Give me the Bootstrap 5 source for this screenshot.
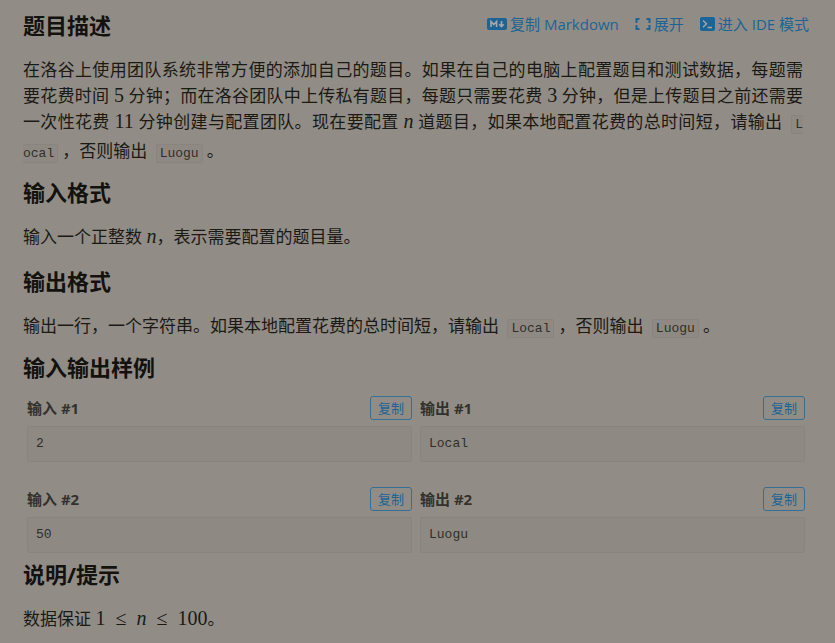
<!DOCTYPE html>
<html lang="zh-CN">
<head>
<meta charset="utf-8">
<meta name="viewport" content="width=device-width, initial-scale=1">
<title>题目描述</title>
<link href="https://cdn.jsdelivr.net/npm/bootstrap@5.3.0/dist/css/bootstrap.min.css" rel="stylesheet">
<style>
:root { --paper: #918d86; --ink: #1b1914; --link: #1c6495; }
body { background: var(--paper); color: var(--ink); font-family: "Open Sans", "Noto Sans CJK SC", sans-serif; font-size: 17px; line-height: 26px; }
.problem { padding: 12px 26px 8px 23px; }
.problem h2 { font-size: 22px; line-height: 26px; font-weight: 700; margin: 0; color: #14120e; }
.problem section { margin-bottom: 18px; }
.problem .has-code { margin-bottom: 12px; }
.problem section p { margin: 19px 6px 0 0; text-align: justify; word-break: break-all; }
.tool-link { color: var(--link); font-size: 15px; line-height: 24px; text-decoration: none; gap: 3px; }
.formula { font-family: "Liberation Serif", serif; font-size: 20px; line-height: 20px; }
.relation { margin: 0 5px; }
.problem code, .sample-text { font-family: "Liberation Mono", monospace; font-size: 13px; color: #302e2a; background: #8e8a83; border: 1px solid #88857e; border-radius: 2px; }
.problem code { padding: 1px 3px; margin: 0 4px; }
.sample-text { padding: 8px; line-height: 18px; margin: 6px 0 0; }
.problem h3 { font-size: 15px; line-height: 22px; font-weight: 700; color: #33312c; margin: 0; }
.samples { padding: 0 4px; margin-top: 16px; row-gap: 25px; column-gap: 8px; display: grid; grid-template-columns: 1fr 1fr; }
.btn-copy { font-size: 13px; line-height: 18px; padding: 2px 7px; border: 1px solid #366f96; border-radius: 3px; color: var(--link); }
</style>
</head>
<body>
<main class="problem container-fluid">
  <section class="has-code">
    <div class="d-flex justify-content-between align-items-start">
      <h2>题目描述</h2>
      <nav class="d-flex gap-3">
        <a class="tool-link d-flex align-items-center" href="#">
          <svg width="20" height="14" viewBox="0 0 20 14" aria-hidden="true"><rect y="1" width="20" height="12" rx="2" fill="#1c6495"/><path d="M4 10V4.500L6.800 7.500 9.600 4.500V10M14.500 4V9.200M12.200 7.200 14.500 9.500 16.800 7.200" fill="none" stroke="#a5a8a8" stroke-width="1.600"/></svg>
          <span>复制 Markdown</span>
        </a>
        <a class="tool-link d-flex align-items-center" href="#">
          <svg width="16" height="14" viewBox="0 0 16 14" aria-hidden="true"><path d="M4.500 2H1.500V6M1.500 8V12H4.500M11.500 2H14.500V6M14.500 8V12H11.500" fill="none" stroke="#1c6495" stroke-width="2"/></svg>
          <span>展开</span>
        </a>
        <a class="tool-link d-flex align-items-center" href="#">
          <svg width="15" height="14" viewBox="0 0 15 14" aria-hidden="true"><rect width="15" height="14" rx="2" fill="#1c6495"/><path d="M3 3.500 6.500 6.800 3 10.200M7.500 10.500H12" fill="none" stroke="#a5a8a8" stroke-width="1.400"/></svg>
          <span>进入 IDE 模式</span>
        </a>
      </nav>
    </div>
    <p>在洛谷上使用团队系统非常方便的添加自己的题目。如果在自己的电脑上配置题目和测试数据，每题需要花费时间 <span class="formula">5</span> 分钟；而在洛谷团队中上传私有题目，每题只需要花费 <span class="formula">3</span> 分钟，但是上传题目之前还需要一次性花费 <span class="formula">11</span> 分钟创建与配置团队。现在要配置 <i class="formula">n</i> 道题目，如果本地配置花费的总时间短，请输出 <code>L<wbr><span class="text-nowrap">ocal</span></code>，否则输出 <code>Luogu</code>。</p>
  </section>
  <section>
    <h2>输入格式</h2>
    <p>输入一个正整数 <i class="formula">n</i>，表示需要配置的题目量。</p>
  </section>
  <section class="has-code">
    <h2>输出格式</h2>
    <p>输出一行，一个字符串。如果本地配置花费的总时间短，请输出 <code>Local</code>，否则输出 <code>Luogu</code>。</p>
  </section>
  <section class="mb-2">
    <h2>输入输出样例</h2>
    <div class="samples">
      <div>
        <div class="d-flex justify-content-between align-items-center"><h3>输入 #1</h3><button type="button" class="btn btn-copy">复制</button></div>
        <pre class="sample-text">2</pre>
      </div>
      <div>
        <div class="d-flex justify-content-between align-items-center"><h3>输出 #1</h3><button type="button" class="btn btn-copy">复制</button></div>
        <pre class="sample-text">Local</pre>
      </div>
      <div>
        <div class="d-flex justify-content-between align-items-center"><h3>输入 #2</h3><button type="button" class="btn btn-copy">复制</button></div>
        <pre class="sample-text">50</pre>
      </div>
      <div>
        <div class="d-flex justify-content-between align-items-center"><h3>输出 #2</h3><button type="button" class="btn btn-copy">复制</button></div>
        <pre class="sample-text">Luogu</pre>
      </div>
    </div>
  </section>
  <section class="mb-0">
    <h2>说明/提示</h2>
    <p>数据保证 <span class="formula">1 <span class="relation">≤</span> <i>n</i> <span class="relation">≤</span> 100</span>。</p>
  </section>
</main>
<script src="https://cdn.jsdelivr.net/npm/bootstrap@5.3.0/dist/js/bootstrap.bundle.min.js"></script>
</body>
</html>
